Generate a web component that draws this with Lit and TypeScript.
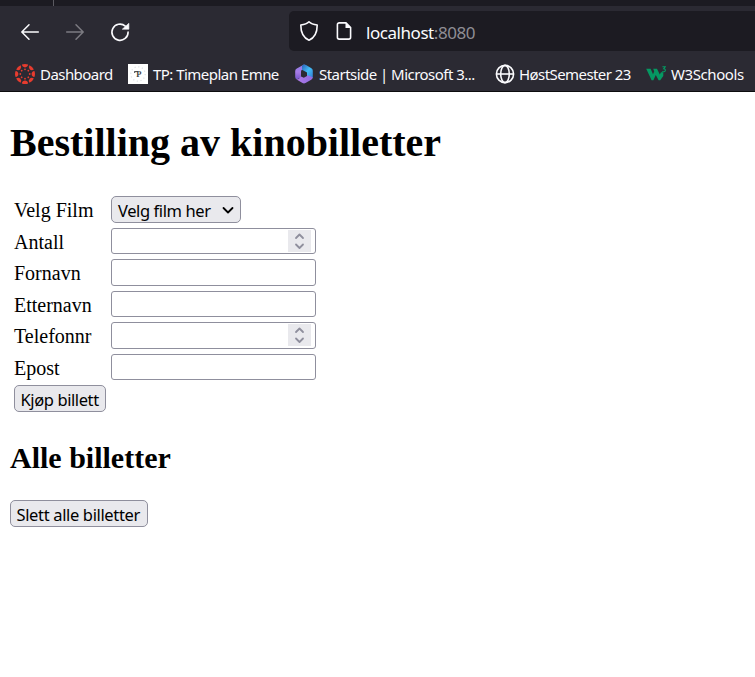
import { LitElement, html, svg, css, nothing } from "lit";
import { customElement } from "lit/decorators.js";

const spokes = [0, 45, 90, 135, 180, 225, 270, 315];

const backIcon = html`<svg width="20" height="20" viewBox="0 0 20 20" fill="none" stroke="#fbfbfe" stroke-width="1.5" stroke-linecap="round" stroke-linejoin="round"><path d="M18.3 10H2M9 2.8 1.8 10 9 17.2" /></svg>`;
const forwardIcon = html`<svg width="20" height="20" viewBox="0 0 20 20" fill="none" stroke="#7c7b82" stroke-width="1.5" stroke-linecap="round" stroke-linejoin="round"><path d="M1.7 10H18M11 2.8 18.2 10 11 17.2" /></svg>`;
const reloadIcon = html`<svg width="20" height="20" viewBox="0 0 20 20"><path d="M18.1 10A8.1 8.1 0 1 1 15.3 4.1" fill="none" stroke="#fbfbfe" stroke-width="1.6" stroke-linecap="round" /><path d="M18.9 1.3V7.2H12.3Z" fill="#fbfbfe" stroke="#fbfbfe" stroke-width=".6" stroke-linejoin="round" /></svg>`;
const shieldIcon = html`<svg width="20" height="22" viewBox="0 0 20 22"><path d="M10 1.8C12 3.8 15 4.6 18.2 5 18.2 12 16.4 17.5 10 20.2 3.6 17.5 1.8 12 1.8 5 5 4.6 8 3.8 10 1.8Z" fill="none" stroke="#fbfbfe" stroke-width="1.6" stroke-linejoin="round" /></svg>`;
const pageIcon = html`<svg width="16" height="20" viewBox="0 0 16 20"><path d="M10 1.9H3.2A1.8 1.8 0 0 0 1.4 3.7V16.3A1.8 1.8 0 0 0 3.2 18.1H12.8A1.8 1.8 0 0 0 14.6 16.3V6.6Z" fill="none" stroke="#fbfbfe" stroke-width="1.6" stroke-linejoin="round" /><path d="M9.5 1.8V7H15Z" fill="#fbfbfe" /></svg>`;

const canvasIcon = html`<svg width="20" height="20" viewBox="0 0 20 20" fill="#e63c2f">${spokes.map(
  (a) => svg`<g transform="rotate(${a} 10 10)"><path d="M6.9.6Q10-.6 13.1.6A3.15 3.4 0 0 1 6.9.6Z" /><circle cx="10" cy="5.3" r=".9" /></g>`
)}</svg>`;
const tpIcon = html`<svg width="20" height="20" viewBox="0 0 20 20"><rect width="20" height="20" fill="#fff" /><circle cx="10" cy="10" r="7.2" fill="none" stroke="#dde1e6" stroke-width="1.2" stroke-dasharray="1.2 2.57" /><text x="10.6" y="13" text-anchor="middle" font-family="Liberation Serif, serif" font-weight="bold" font-size="8.5" fill="#444">P</text><path d="M6.5 7.6H10M6.7 7.3V9" stroke="#444" /></svg>`;
const microsoftIcon = html`<svg width="18" height="20" viewBox="0 0 18 20">
  <defs>
    <linearGradient id="l" x1="0" y1="0" x2="0" y2="1"><stop offset="0" stop-color="#8c7ee8" /><stop offset=".5" stop-color="#a77be6" /><stop offset="1" stop-color="#7355c8" /></linearGradient>
    <linearGradient id="r" x1="0" y1="0" x2="1" y2="1"><stop offset="0" stop-color="#2a5fb8" /><stop offset=".5" stop-color="#43bdf5" /><stop offset="1" stop-color="#3178d4" /></linearGradient>
    <linearGradient id="b" x1="0" y1="0" x2="1" y2="0"><stop offset="0" stop-color="#b07be8" /><stop offset="1" stop-color="#8f6be0" /></linearGradient>
  </defs>
  <path d="M9 .5 1.8 4.4Q.2 5.3.2 7V13Q.2 14.7 1.8 15.6L6 13.6V7.8Q6 6.5 7 5.8L12.3 2.4Z" fill="url(#l)" />
  <path d="M8.8.5Q10 .2 11 .9L16.4 4.2Q17.8 5.1 17.8 6.8V13.2L16.5 15 12 12.4V8.4L7 5.8V1.6Z" fill="url(#r)" />
  <path d="M1.6 15.5 7.5 19Q9 19.9 10.5 19L16.2 15.8Q17.6 15 17.8 13.2L12 10.9V12.1L8.8 13.8 6 12.4Q4.5 15 1.6 15.5Z" fill="url(#b)" />
</svg>`;
const globeIcon = html`<svg width="20" height="20" viewBox="0 0 20 20" fill="none" stroke="#fbfbfe" stroke-width="1.6"><circle cx="10" cy="10" r="8.6" /><ellipse cx="10" cy="10" rx="4.3" ry="8.6" /><path d="M1.4 10H18.6" /></svg>`;
const w3Icon = html`<svg width="20" height="20" viewBox="0 0 20 20"><path d="M.2 4.8H4.6L7 10.2 8.2 7.4 7.2 4.8H11L13.8 10.6 15 8.3H17.3V12L14.2 16.2H12.6L9.8 11 7.4 16.2H5.6Z" fill="#059862" /><path d="M16.4 2.8H19.2L17.6 4.8Q19.7 5 19.3 6.8 18.5 8.4 16.3 7.4" fill="none" stroke="#059862" stroke-width="1.1" /></svg>`;

const bookmarks = [
  { key: "dashboard", icon: canvasIcon, label: "Dashboard" },
  { key: "timeplan", icon: tpIcon, label: "TP: Timeplan Emne" },
  { key: "microsoft", icon: microsoftIcon, label: "Startside | Microsoft 3..." },
  { key: "semester", icon: globeIcon, label: "HøstSemester 23" },
  { key: "w3", icon: w3Icon, label: "W3Schools" },
];

const fields = [
  { label: "Antall", stepper: true },
  { label: "Fornavn", stepper: false },
  { label: "Etternavn", stepper: false },
  { label: "Telefonnr", stepper: true },
  { label: "Epost", stepper: false },
];

@customElement("browser-chrome")
export class BrowserChrome extends LitElement {
  static styles = css`
    :host { display: block; height: 92px; box-sizing: border-box; background: #2b2a33; border-bottom: 1px solid #0c0c0e; color: #fbfbfe; font-family: "Noto Sans", "Open Sans", sans-serif; overflow: hidden; }
    svg { display: block; flex: none; }
    .tabs { height: 6px; background: #1c1b22; }
    .divider { width: 1px; height: 6px; margin-left: 53px; background: #5b5a61; }
    .nav { display: flex; height: 51px; align-items: center; padding-left: 20px; }
    .buttons { display: flex; gap: 25px; width: 269px; }
    .address { display: flex; flex: 1; align-items: center; height: 40px; margin-top: -1px; padding-left: 10px; border-radius: 5px 0 0 5px; background: #1c1b22; }
    .address svg + svg { margin-left: 17px; }
    .url { margin-left: 14px; padding-top: 2px; font-size: 17px; letter-spacing: -0.45px; white-space: nowrap; }
    .port { color: #8f8e95; }
    .bookmarks { display: flex; height: 34px; align-items: center; padding-left: 15px; }
    .bookmark { display: flex; flex: none; align-items: center; gap: 5px; font-size: 15px; white-space: nowrap; }
    .dashboard { width: 113px; letter-spacing: -0.55px; }
    .timeplan { width: 167px; letter-spacing: -0.53px; }
    .microsoft { width: 200px; gap: 6px; letter-spacing: -0.53px; }
    .semester { width: 151px; gap: 4px; letter-spacing: -0.57px; }
    .w3 { letter-spacing: -0.42px; }
  `;

  render() {
    return html`
      <div class="tabs"><div class="divider"></div></div>
      <div class="nav">
        <div class="buttons">${backIcon}${forwardIcon}${reloadIcon}</div>
        <div class="address">${shieldIcon}${pageIcon}<span class="url">localhost<span class="port">:8080</span></span></div>
      </div>
      <div class="bookmarks">
        ${bookmarks.map((b) => html`<div class="bookmark ${b.key}">${b.icon}<span>${b.label}</span></div>`)}
      </div>
    `;
  }
}

@customElement("ticket-page")
export class TicketPage extends LitElement {
  static styles = css`
    :host { display: block; padding: 0 10px; color: #000; font-family: "Liberation Serif", serif; font-size: 20px; }
    h1, h2 { margin: 0; white-space: nowrap; }
    h1 { padding-top: 28px; font-size: 40px; line-height: 46px; letter-spacing: 0; }
    h2 { margin-top: 28px; font-size: 30px; line-height: 35px; }
    .form { display: grid; grid-template-columns: 97px 205px; grid-auto-rows: 26.5px; row-gap: 5px; margin: 30px 0 0 4px; }
    .label { line-height: 28.5px; white-space: nowrap; }
    .select, .button { display: inline-flex; box-sizing: border-box; align-items: center; height: 27px; padding: 2px 6px 0; border: 1px solid #8f8f9d; border-radius: 5px; background: #e9e9ed; color: #000; font-family: "Noto Sans", "Open Sans", sans-serif; font-size: 16.5px; line-height: 24px; letter-spacing: -0.4px; white-space: nowrap; }
    .select { width: 130px; justify-content: space-between; }
    .field { display: flex; box-sizing: border-box; align-items: center; justify-content: flex-end; padding-right: 4px; border: 1px solid #8f8f9d; border-radius: 3px; background: #fff; }
    .stepper { display: block; width: 23px; height: 22px; background: #e9e9ed; }
    .buy { width: 92px; padding-left: 5.5px; }
    .clear { width: 138px; margin-top: 25px; padding: 3px 5.5px 0; letter-spacing: -0.35px; }
  `;

  render() {
    return html`
      <h1>Bestilling av kinobilletter</h1>
      <div class="form">
        <div class="label">Velg Film</div>
        <div class="select"><span>Velg film her</span><svg width="12" height="12" viewBox="0 0 12 12" fill="none" stroke="#000" stroke-width="1.8" stroke-linecap="round" stroke-linejoin="round"><path d="M1.5 3 6 7.5 10.5 3" /></svg></div>
        ${fields.map(
          (f) => html`<div class="label">${f.label}</div>
            <div class="field">${f.stepper
              ? html`<svg class="stepper" viewBox="0 0 23 22" fill="none" stroke="#8f8f9d" stroke-width="1.8" stroke-linecap="round" stroke-linejoin="round"><path d="M8 8 11.5 4.5 15 8M8 14.5 11.5 18 15 14.5" /></svg>`
              : nothing}</div>`
        )}
        <div class="button buy">Kjøp billett</div>
      </div>
      <h2>Alle billetter</h2>
      <div class="button clear">Slett alle billetter</div>
    `;
  }
}

@customElement("app-root")
export class AppRoot extends LitElement {
  static styles = css`
    :host { display: block; height: 677px; background: #fff; overflow: hidden; }
  `;

  render() {
    return html`<browser-chrome></browser-chrome><ticket-page></ticket-page>`;
  }
}
